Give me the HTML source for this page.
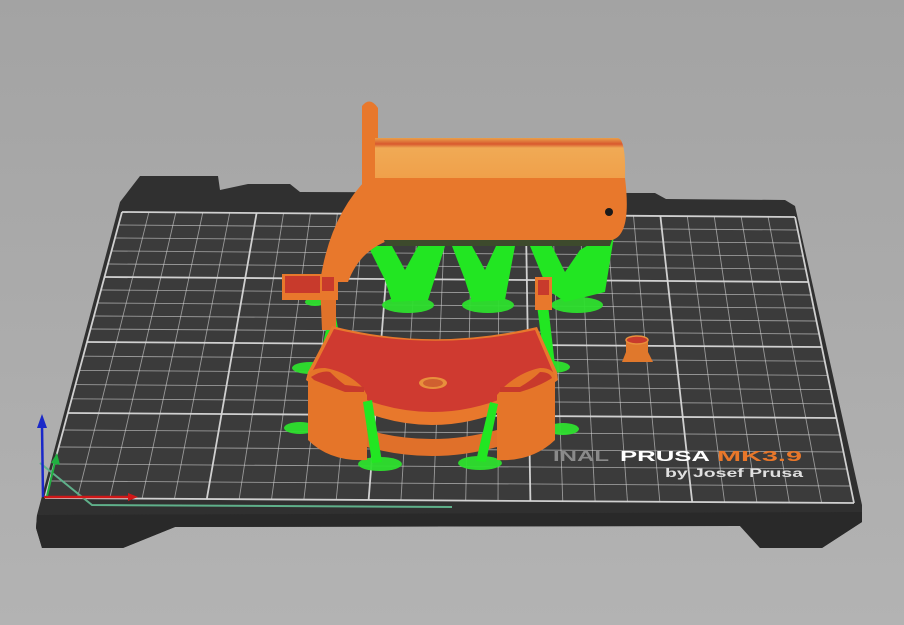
<!DOCTYPE html>
<html><head><meta charset="utf-8"><style>
html,body{margin:0;padding:0;width:904px;height:625px;overflow:hidden;background:#a8a8a8}
svg{display:block}
text{font-family:"Liberation Sans",sans-serif;font-weight:bold}
</style></head><body>
<svg id="s" width="904" height="625" viewBox="0 0 904 625" xmlns="http://www.w3.org/2000/svg">
<defs>
<linearGradient id="bg" x1="0" y1="0" x2="0" y2="1"><stop offset="0" stop-color="#a3a3a3"/><stop offset="1" stop-color="#b3b3b3"/></linearGradient>
<linearGradient id="top" x1="0" y1="0" x2="0" y2="1"><stop offset="0" stop-color="#e9a04a"/><stop offset="0.15" stop-color="#d8582e"/><stop offset="0.25" stop-color="#f0aa55"/><stop offset="1" stop-color="#f0a04a"/></linearGradient>
</defs>
<rect width="904" height="625" fill="url(#bg)"/>
<path d="M140,176 L218,176 L220,190 L248,184 L290,184 L300,192 L655,193 L666,199 L785,200 L795,206 L862,505 L862,522 L822,548 L760,548 L740,526 L175,527 L123,548 L42,548 L36,528 L37,515 L120,202 Z" fill="#303030"/>
<path d="M37,515 L36,528 L42,548 L123,548 L175,527 L740,526 L760,548 L822,548 L862,522 L862,512 L40,515 Z" fill="#292929"/>
<path d="M122,212 L795,217 L854,503 L45,498 Z" fill="#3b3b3b"/>
<g id="grid" stroke="#d8d8d8" fill="none"></g>
<path d="M40,463 L92,505 L452,507" stroke="#5fb08a" stroke-width="2" fill="none"/>
<line x1="44" y1="497" x2="130" y2="497" stroke="#d01818" stroke-width="2.5"/>
<path d="M128,493 L138,497 L128,501Z" fill="#d01818"/>
<line x1="43" y1="497" x2="42" y2="425" stroke="#1a28c8" stroke-width="2.5"/>
<path d="M37,428 L42,414 L47,428Z" fill="#1a28c8"/>
<line x1="47" y1="496" x2="55" y2="462" stroke="#20b040" stroke-width="2"/>
<path d="M51,463 L57,453 L60,465Z" fill="#20b040"/>
<text x="553" y="461" font-size="15" fill="#8a8a8a" textLength="56" lengthAdjust="spacingAndGlyphs">INAL</text>
<text x="620" y="461" font-size="15" fill="#ffffff" textLength="90" lengthAdjust="spacingAndGlyphs">PRUSA</text>
<text x="717" y="461" font-size="15" fill="#e8772a" textLength="85" lengthAdjust="spacingAndGlyphs">MK3.9</text>
<text x="665" y="477" font-size="11.5" fill="#e0e0e0" textLength="138" lengthAdjust="spacingAndGlyphs">by Josef Prusa</text>
<g fill="#2ee02e" opacity="0.95">
<ellipse cx="408" cy="305" rx="26" ry="8"/><ellipse cx="488" cy="305" rx="26" ry="8"/><ellipse cx="577" cy="305" rx="26" ry="8"/>
<ellipse cx="310" cy="368" rx="18" ry="6"/><ellipse cx="552" cy="367" rx="18" ry="6"/>
<ellipse cx="300" cy="428" rx="16" ry="6"/><ellipse cx="563" cy="429" rx="16" ry="6"/>
<ellipse cx="380" cy="464" rx="22" ry="7"/><ellipse cx="480" cy="463" rx="22" ry="7"/>
<ellipse cx="315" cy="302" rx="10" ry="4"/>
</g>
<g fill="#22e622">
<path d="M368,246 L392,246 L405,270 L418,246 L445,246 L428,300 L392,302 L385,280 Z"/>
<path d="M452,246 L472,246 L485,270 L496,246 L515,246 L505,300 L472,302 L465,280 Z"/>
<path d="M530,246 L552,246 L565,272 L580,250 L605,235 L615,230 L605,292 L565,302 L548,290 Z"/>
<circle cx="603" cy="214" r="7"/>
<path d="M598,218 L608,218 L612,240 L602,255 Z"/>
<path d="M323,300 L333,300 L340,340 L330,368 L318,366 L326,330 Z"/>
<path d="M537,305 L548,305 L555,365 L545,368 Z"/>
</g>
<path d="M362,106 Q370,96 378,108 L378,190 L362,190 Z" fill="#e8782c"/>
<path d="M375,138 L618,138 Q626,140 625,178 L375,178 Z" fill="url(#top)"/>
<path d="M368,178 L625,178 Q632,235 612,240 L390,240 Q360,250 348,282 L320,282 Q330,215 368,178 Z" fill="#e8782c"/>
<path d="M384,240 L612,240 L610,246 L386,246 Z" fill="#3d4a2c"/>
<circle cx="609" cy="212" r="4" fill="#1a1a1a"/>
<path d="M320,282 L336,282 L336,330 L322,330 Z" fill="#e0722a"/>
<path d="M282,274 L338,274 L338,300 L282,300 Z" fill="#e8782c"/>
<path d="M285,276 L320,276 L320,293 L285,293 Z" fill="#c83a2c"/>
<path d="M322,277 L334,277 L334,291 L322,291 Z" fill="#c83a2c"/>
<path d="M535,277 L552,277 L552,310 L535,310 Z" fill="#e8782c"/>
<path d="M538,280 L549,280 L549,295 L538,295 Z" fill="#c83a2c"/>
<path d="M332,326 Q432,352 537,327 L557,372 L558,380 Q432,470 306,380 L308,372 Z" fill="#e8782c"/>
<path d="M334,329 Q432,352 535,330 L553,372 Q432,452 312,372 Z" fill="#cf3a30"/>
<ellipse cx="433" cy="383" rx="14" ry="6" fill="#e8903c"/>
<ellipse cx="433" cy="383" rx="10" ry="4" fill="#d06030"/>
<path d="M308,378 Q308,368 325,368 Q348,372 363,388 L367,395 L367,460 Q330,462 308,440 Z" fill="#e57529"/>
<path d="M311,377 Q322,370 330,372 Q338,380 345,385 L364,387 L364,392 L345,392 Q326,385 314,380 Z" fill="#c83a2c"/>
<path d="M497,395 L503,388 Q520,372 540,368 Q556,368 555,380 L555,440 Q532,462 497,460 Z" fill="#e57529"/>
<path d="M500,387 L520,387 Q532,380 540,372 Q550,372 552,378 Q540,386 520,392 L500,392 Z" fill="#c83a2c"/>
<path d="M367,430 Q432,448 497,430 L497,447 Q432,465 367,447 Z" fill="#e0702a"/>
<path d="M626,340 L648,340 L648,352 L653,362 L622,362 L626,352 Z" fill="#e0782c"/>
<ellipse cx="637" cy="340" rx="11" ry="4" fill="#c83a2c" stroke="#e8903c" stroke-width="1.5"/>
<g fill="#22e622">
<path d="M363,402 L372,400 L382,462 L372,463 Z"/>
<path d="M490,402 L498,404 L486,462 L476,461 Z"/>
</g>
</svg>
<script>
(function(){
var g=document.getElementById('grid');var ns='http://www.w3.org/2000/svg';
var TL=[122,212],TR=[795,217],BR=[854,503],BL=[45,498];
var majY=[212,277,342,413,498];
function rowY(j){var k=Math.min(3,Math.floor(j/5));var f=(j-k*5)/5;return majY[k]+(majY[k+1]-majY[k])*f;}
function line(x1,y1,x2,y2,w,o){var l=document.createElementNS(ns,'line');l.setAttribute('x1',x1);l.setAttribute('y1',y1);l.setAttribute('x2',x2);l.setAttribute('y2',y2);l.setAttribute('stroke-width',w);l.setAttribute('stroke-opacity',o);g.appendChild(l);}
for(var i=0;i<=25;i++){var t=i/25;var x1=TL[0]+(TR[0]-TL[0])*t,y1=TL[1]+(TR[1]-TL[1])*t,x2=BL[0]+(BR[0]-BL[0])*t,y2=BL[1]+(BR[1]-BL[1])*t;var m=(i%5==0);line(x1,y1,x2,y2,m?1.8:0.9,m?0.95:0.6);}
for(var j=0;j<=20;j++){var y=rowY(j);var f=(y-212)/(498-212);var lx=TL[0]+(BL[0]-TL[0])*f,rx=TR[0]+(BR[0]-TR[0])*f;var m=(j%5==0);line(lx,y,rx,y+5,m?1.8:0.9,m?0.95:0.6);}
})();
</script>
</body></html>
